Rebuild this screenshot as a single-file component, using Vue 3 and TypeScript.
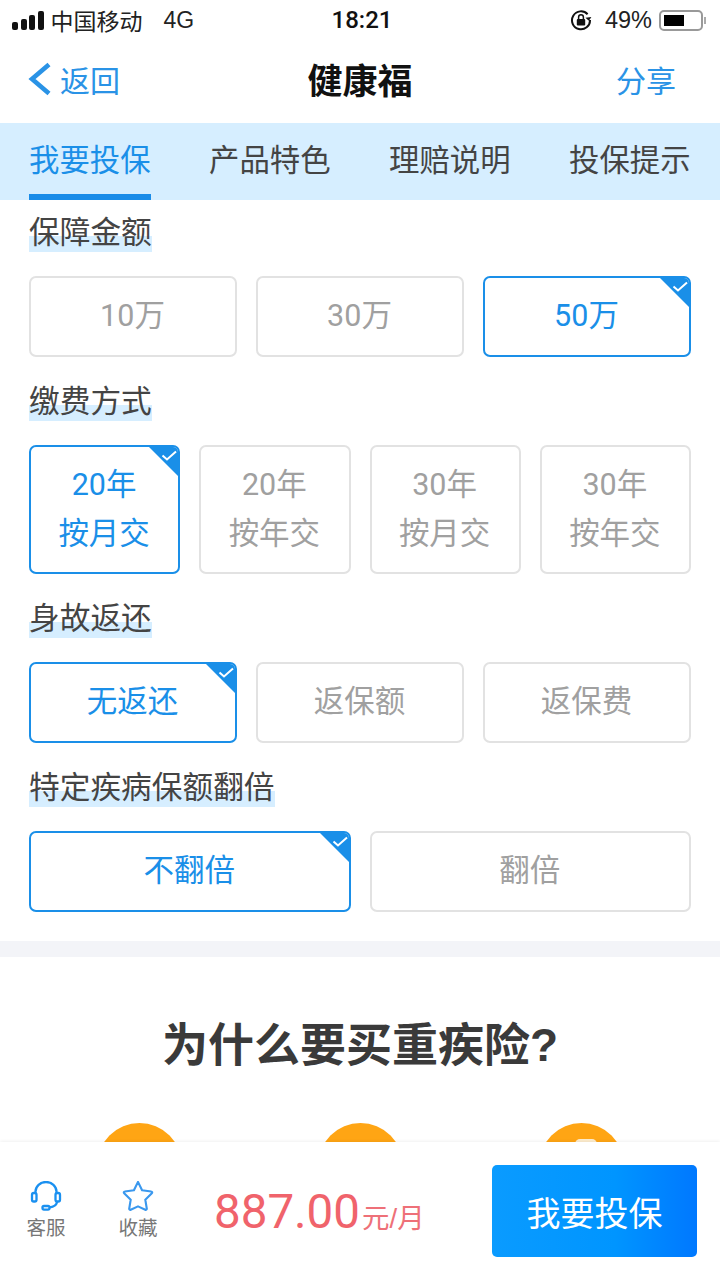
<script setup lang="ts">
import { ref } from 'vue'

interface OptionGroup {
  title: string
  columns: number
  tall?: boolean
  selected: number
  options: string[][]
}

const tabs = ['我要投保', '产品特色', '理赔说明', '投保提示']
const activeTab = ref(0)

const groups = ref<OptionGroup[]>([
  { title: '保障金额', columns: 3, selected: 2, options: [['10万'], ['30万'], ['50万']] },
  {
    title: '缴费方式',
    columns: 4,
    tall: true,
    selected: 0,
    options: [['20年', '按月交'], ['20年', '按年交'], ['30年', '按月交'], ['30年', '按年交']],
  },
  { title: '身故返还', columns: 3, selected: 0, options: [['无返还'], ['返保额'], ['返保费']] },
  { title: '特定疾病保额翻倍', columns: 2, selected: 0, options: [['不翻倍'], ['翻倍']] },
])
</script>

<template>
  <div class="page">
    <div class="status">
      <div class="status-left">
        <span class="signal"><i /><i /><i /><i /></span>
        <span class="carrier">中国移动</span>
        <span class="net">4G</span>
      </div>
      <div class="clock">18:21</div>
      <div class="status-right">
        <svg class="lock" width="22" height="22" viewBox="0 0 22 22" fill="none">
          <path d="M17.6 5.2A9 9 0 1 0 20 11" stroke="#111" stroke-width="2" />
          <path d="M15.5 8.5h6l-3 3.4z" fill="#111" transform="rotate(-8 18 9)" />
          <rect x="6.8" y="10" width="8.4" height="6.6" rx="1" fill="#111" />
          <path d="M8.6 10V8.2a2.4 2.4 0 0 1 4.8 0V10" stroke="#111" stroke-width="1.5" />
        </svg>
        <span class="pct">49%</span>
        <span class="battery"><b /></span>
        <span class="nub" />
      </div>
    </div>

    <header class="nav">
      <div class="back">
        <svg width="24" height="34" viewBox="0 0 24 34" fill="none">
          <path d="M21 2.5 4 17 21 31.5" stroke="#2a93e6" stroke-width="4.6" />
        </svg>
        <span>返回</span>
      </div>
      <h1>健康福</h1>
      <div class="share">分享</div>
    </header>

    <nav class="tabs">
      <div
        v-for="(tab, i) in tabs"
        :key="tab"
        class="tab"
        :class="{ on: i === activeTab }"
      >{{ tab }}</div>
    </nav>

    <section v-for="group in groups" :key="group.title" class="group">
      <div class="group-title"><span>{{ group.title }}</span></div>
      <div class="opts" :class="'cols-' + group.columns">
        <div
          v-for="(opt, i) in group.options"
          :key="i"
          class="opt"
          :class="{ on: i === group.selected, tall: group.tall }"
        >
          <div v-for="line in opt" :key="line">{{ line }}</div>
          <svg v-if="i === group.selected" class="tick" width="29" height="29" viewBox="0 0 29 29">
            <path d="M0 0h29v29z" fill="#1a8fe8" />
            <path d="M13.5 8.5l4.5 4 9-8" fill="none" stroke="#fff" stroke-width="2" />
          </svg>
        </div>
      </div>
    </section>

    <div class="band" />

    <h2 class="why">为什么要买重疾险?</h2>
    <div class="dots">
      <span class="dot" />
      <span class="dot" />
      <span class="dot"><em /></span>
    </div>

    <footer class="bar">
      <div class="tool">
        <svg width="32" height="30" viewBox="0 0 32 30" fill="none" stroke="#1a90f0" stroke-width="2.3">
          <path d="M5.5 13V10.5a10.5 9.5 0 0 1 21 0V13" />
          <rect x="2" y="12" width="4.5" height="8.5" rx="1.8" />
          <rect x="25.5" y="12" width="4.5" height="8.5" rx="1.8" />
          <path d="M27 20.5c0 3.5-3.5 5.5-8 6" />
          <rect x="12.5" y="25" width="7" height="3.6" rx="1.5" />
        </svg>
        <span>客服</span>
      </div>
      <div class="tool">
        <svg width="32" height="30" viewBox="2 1 28 28" fill="none" stroke="#3a98ee" stroke-width="2" stroke-linejoin="round">
          <path d="M16 1.8l3.8 7.8 8.5 1.2c.9.1 1.2 1 .6 1.6l-6.1 6 1.4 8.4c.1.9-.7 1.4-1.4 1l-6.8-3.1-6.800 3.100c-.7.4-1.500-.1-1.400-1l1.400-8.400-6.100-6c-.6-.6-.3-1.500.6-1.600l8.500-1.200z" />
        </svg>
        <span>收藏</span>
      </div>
      <div class="price"><strong>887.00</strong><span>元/月</span></div>
      <button class="buy" type="button">我要投保</button>
    </footer>
  </div>
</template>

<style scoped>
.page {
  position: relative;
  width: 720px;
  height: 1280px;
  overflow: hidden;
  background: #fff;
  font-family: "Liberation Sans", "Noto Sans CJK SC", sans-serif;
  color: #444;
}

.status {
  display: flex;
  align-items: center;
  height: 40px;
  padding: 0 16px 0 12px;
  color: #222;
  font-size: 23px;
}
.status-left { display: flex; align-items: center; width: 290px; }
.signal { display: flex; align-items: flex-end; gap: 2.5px; height: 20px; margin-right: 7px; }
.signal i { width: 6px; background: #111; border-radius: 2px; }
.signal i:nth-child(1) { height: 8px; }
.signal i:nth-child(2) { height: 11px; }
.signal i:nth-child(3) { height: 15px; }
.signal i:nth-child(4) { height: 19px; }
.net { margin-left: 21px; }
.clock {
  width: 120px;
  text-align: center;
  font-family: Roboto, "Liberation Sans", sans-serif;
  font-size: 24px;
  font-weight: 500;
  color: #111;
}
.status-right { display: flex; align-items: center; margin-left: auto; margin-right: -2px; }
.lock { margin-right: 13px; }
.pct { margin-right: 7px; font-size: 23.5px; }
.battery { display: block; width: 44px; height: 21px; padding: 3px; box-sizing: border-box; border: 2px solid #999; border-radius: 5px; }
.battery b { display: block; width: 20px; height: 100%; background: #000; }
.nub { width: 2px; height: 7px; background: #aaa; margin-left: 1px; }

.nav {
  position: relative;
  display: flex;
  align-items: center;
  justify-content: space-between;
  height: 83px;
  box-sizing: border-box;
  padding: 0 44px 6px 28px;
  font-size: 30px;
  color: #2a93e6;
}
.back { display: flex; align-items: center; gap: 8px; }
.nav h1 {
  position: absolute;
  left: 0;
  right: 0;
  margin: 0;
  text-align: center;
  font-size: 35px;
  font-weight: 700;
  color: #111;
  pointer-events: none;
}

.tabs {
  display: flex;
  gap: 58px;
  height: 77px;
  padding: 0 29px;
  background: #d6eeff;
}
.tab {
  width: 122px;
  box-sizing: border-box;
  height: 77px;
  border-bottom: 6px solid transparent;
  font-size: 30.4px;
  line-height: 75px;
  white-space: nowrap;
  color: #444;
}
.tab.on { color: #1a8fe8; border-bottom-color: #1a8ce8; }

.group { padding: 0 29px; }
.group-title {
  height: 36px;
  margin: 26px 0;
  font-size: 30.7px;
  line-height: 38px;
  color: #444;
}
.group-title span {
  display: inline-block;
  background: linear-gradient(#d6eeff, #d6eeff) left bottom / 100% 16px no-repeat;
}
.group:first-of-type .group-title { margin: 14px 0 26px; }

.opts { display: grid; gap: 19px; }
.cols-2 { grid-template-columns: repeat(2, 1fr); }
.cols-3 { grid-template-columns: repeat(3, 1fr); }
.cols-4 { grid-template-columns: repeat(4, 1fr); }

.opt {
  position: relative;
  display: flex;
  flex-direction: column;
  align-items: center;
  justify-content: center;
  height: 81px;
  box-sizing: border-box;
  padding: 0 1px 2px 0;
  overflow: hidden;
  border: 2px solid #e2e2e2;
  border-radius: 7px;
  font-family: Roboto, "Noto Sans CJK SC", sans-serif;
  font-size: 30.5px;
  line-height: 49px;
  color: #a0a0a0;
}
.opt.tall { height: 129px; }
.opt.on { border-color: #1a8fe8; color: #1a8fe8; }
.tick { position: absolute; top: 0; right: 0; }

.band { height: 16px; margin-top: 29px; background: #f3f4f8; }

.why {
  margin: 57px 0 47px;
  height: 62px;
  text-align: center;
  font-size: 46px;
  line-height: 62px;
  font-weight: 700;
  color: #3a3a3a;
}

.dots { display: grid; grid-template-columns: repeat(3, 221px); justify-content: center; justify-items: center; }
.dot { position: relative; display: block; width: 85px; height: 85px; border-radius: 50%; background: #ffa514; overflow: hidden; }
.dot em { position: absolute; left: 36px; top: 16px; width: 22px; height: 22px; background: #fdeccd; border-radius: 5px; }

.bar {
  position: absolute;
  left: 0;
  right: 0;
  bottom: 0;
  display: flex;
  align-items: center;
  height: 138px;
  box-sizing: border-box;
  padding: 0 23px 0 27px;
  background: #fff;
  box-shadow: 0 -1px 3px rgba(0, 0, 0, 0.06);
}
.tool {
  display: flex;
  flex-direction: column;
  align-items: center;
  gap: 4px;
  width: 38px;
  margin-right: 54px;
  font-size: 19.5px;
  line-height: 26px;
  white-space: nowrap;
  color: #777;
}
.tool svg { flex: none; }
.price { display: flex; align-items: baseline; margin: 2px 0 0 3px; color: #f0636b; white-space: nowrap; }
.price strong { font-family: Roboto, sans-serif; font-size: 47.5px; font-weight: 400; line-height: 54px; }
.price span { font-size: 27.5px; margin-left: 2px; color: #ee7078; }
.buy {
  width: 205px;
  height: 92px;
  margin-left: auto;
  border: 0;
  border-radius: 5px;
  background: linear-gradient(90deg, #0a9bff, #0095ff 60%, #0078ff);
  color: #fff;
  font-family: inherit;
  font-size: 34px;
}
</style>
